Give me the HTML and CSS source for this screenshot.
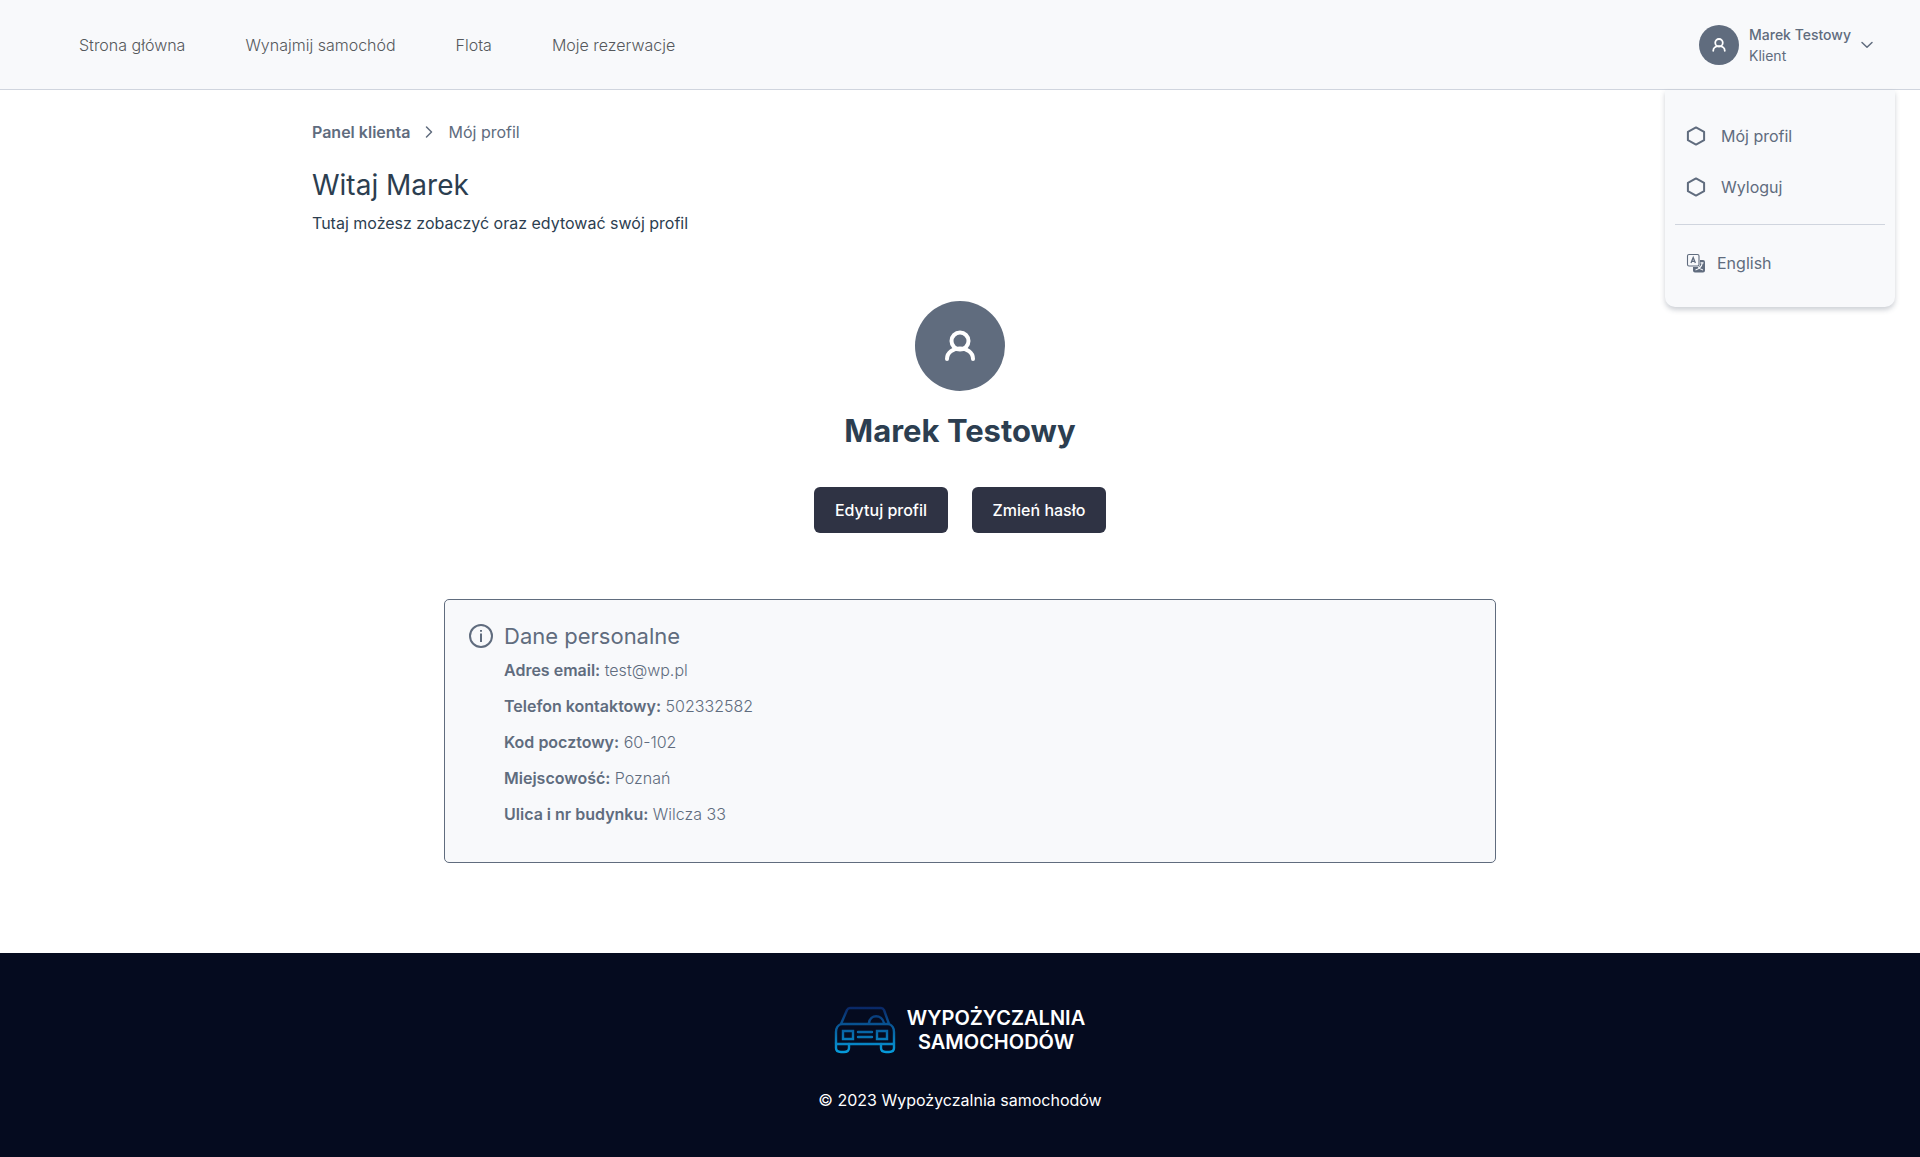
FILE: index.html
```
<!DOCTYPE html>
<html lang="pl">
<head>
<meta charset="utf-8">
<meta name="viewport" content="width=device-width, initial-scale=1">
<title>Mój profil</title>
<link rel="stylesheet" href="styles.css">
</head>
<body>
<header class="topbar">
  <nav class="main-nav">
    <a href="#">Strona główna</a>
    <a href="#">Wynajmij samochód</a>
    <a href="#">Flota</a>
    <a href="#">Moje rezerwacje</a>
  </nav>
  <div class="account">
    <button class="account-toggle" type="button" aria-expanded="true">
      <span class="avatar avatar-small">
        <svg width="16" height="16" viewBox="0 0 36 36" fill="none" stroke="currentColor" stroke-width="4" stroke-linecap="round"><circle cx="18" cy="13" r="8.500"/><path d="M5 31C5 17 31 17 31 31"/></svg>
      </span>
      <span class="account-text"><span class="account-name">Marek Testowy</span><span>Klient</span></span>
      <svg width="13" height="8" viewBox="1 0 13 8" fill="none" stroke="currentColor" stroke-width="1.500" stroke-linecap="round" stroke-linejoin="round"><path d="M2 1.500L7 6.200L12 1.500"/></svg>
    </button>
    <nav class="menu">
      <a class="menu-item" href="#">
        <svg width="20" height="20" viewBox="0 0 20 20" fill="none" stroke="currentColor" stroke-width="2" stroke-linejoin="round"><path d="M10 1.400L18.100 5.800V14.200L10 18.600L1.900 14.200V5.800Z"/></svg>
        Mój profil
      </a>
      <a class="menu-item" href="#">
        <svg width="20" height="20" viewBox="0 0 20 20" fill="none" stroke="currentColor" stroke-width="2" stroke-linejoin="round"><path d="M10 1.400L18.100 5.800V14.200L10 18.600L1.900 14.200V5.800Z"/></svg>
        Wyloguj
      </a>
      <hr class="menu-rule">
      <a class="menu-item menu-language" href="#">
        <svg width="20" height="20" viewBox="0 0 20 20" fill="none">
          <path d="M14 7H17a2 2 0 0 1 2 2V17.500a2 2 0 0 1-2 2H9a2 2 0 0 1-2-2V14H12a2 2 0 0 0 2-2Z" fill="currentColor"/>
          <rect x="1.500" y="1.500" width="11.500" height="11.500" rx="1.500" stroke="currentColor" stroke-width="1.100"/>
          <path d="M5 10L7.200 4.500L9.400 10M5.800 8.300H8.600" stroke="currentColor" stroke-width="1.300"/>
          <path d="M14.500 9.800H17.500M16.300 10C15.800 13 13 16 9.500 17M12.300 14C13.500 15.700 15 16.700 17 17" stroke="#f8f9fb" stroke-width="1.200"/>
        </svg>
        English
      </a>
    </nav>
  </div>
</header>

<main class="page">
  <nav class="breadcrumb" aria-label="Breadcrumb">
    <a href="#">Panel klienta</a>
    <svg width="8" height="14" viewBox="0 0 8 14" fill="none" stroke="currentColor" stroke-width="1.500" stroke-linecap="round" stroke-linejoin="round"><path d="M1.500 2L6.500 7L1.500 12"/></svg>
    <span>Mój profil</span>
  </nav>
  <h1 class="welcome">Witaj Marek</h1>
  <p class="lead">Tutaj możesz zobaczyć oraz edytować swój profil</p>

  <section class="profile">
    <span class="avatar avatar-large">
      <svg width="36" height="36" viewBox="0 0 36 36" fill="none" stroke="currentColor" stroke-width="4" stroke-linecap="round"><circle cx="18" cy="13" r="8.500"/><path d="M5 31C5 17 31 17 31 31"/></svg>
    </span>
    <h2 class="profile-name">Marek Testowy</h2>
    <div class="actions">
      <button class="button" type="button">Edytuj profil</button>
      <button class="button" type="button">Zmień hasło</button>
    </div>
  </section>

  <section class="card">
    <svg class="card-icon" width="24" height="24" viewBox="0 0 24 24" fill="none" stroke="currentColor" stroke-width="2"><circle cx="12" cy="12" r="11"/><path d="M12 9.500V18M12 6V7.800"/></svg>
    <div>
      <h3 class="card-title">Dane personalne</h3>
      <p class="field"><strong>Adres email:</strong> test@wp.pl</p>
      <p class="field"><strong>Telefon kontaktowy:</strong> 502332582</p>
      <p class="field"><strong>Kod pocztowy:</strong> 60-102</p>
      <p class="field"><strong>Miejscowość:</strong> Poznań</p>
      <p class="field"><strong>Ulica i nr budynku:</strong> Wilcza 33</p>
    </div>
  </section>
</main>

<footer class="footer">
  <div class="brand">
    <svg width="60" height="48" viewBox="0 0 60 48" fill="none" stroke="url(#car)" stroke-width="2.400" stroke-linejoin="round" stroke-linecap="round">
      <defs><linearGradient id="car" gradientUnits="userSpaceOnUse" x1="0" y1="0" x2="0" y2="48"><stop offset="0" stop-color="#0a2463"/><stop offset="1" stop-color="#069fdf"/></linearGradient></defs>
      <path d="M6 18L12 4Q13 2 15 2H46Q48 2 49 4L54 18"/>
      <path d="M6 18H54Q59 20 59 26V37Q59 38 58 38H2Q1 38 1 37V26Q1 20 6 18Z"/>
      <path d="M34 17C35 8 47 8 49 17"/>
      <path d="M1 37V42Q1 46 6 46H9Q14 46 14 42V38M46 38V42Q46 46 51 46H54Q59 46 59 42V37"/>
      <path d="M8 25H18V33H8ZM42 25H52V33H42ZM23 26H37M23 31H37" stroke-linejoin="miter"/>
    </svg>
    <p class="brand-name">WYPOŻYCZALNIA<br>SAMOCHODÓW</p>
  </div>
  <p class="copyright">© 2023 Wypożyczalnia samochodów</p>
</footer>
</body>
</html>
```
FILE: styles.css
```
* { box-sizing: border-box; }

body {
  margin: 0;
  min-height: 100vh;
  display: flex;
  flex-direction: column;
  background: #fff;
  color: #2c3e50;
  font: 400 16px/24px Inter, "Liberation Sans", sans-serif;
}

h1, h2, h3, p { margin: 0; }
a { color: inherit; text-decoration: none; }
svg { display: block; flex: none; overflow: visible; }
button { font: inherit; cursor: pointer; border: 0; }

.topbar {
  display: flex;
  justify-content: space-between;
  align-items: center;
  height: 90px;
  padding: 0 46px 0 79px;
  background: #f8f9fb;
  border-bottom: 1px solid #d0d5de;
  color: #606c7e;
}

.main-nav {
  display: flex;
  gap: 60px;
  color: #55585c;
  font-weight: 300;
}

.account-toggle {
  display: flex;
  align-items: center;
  gap: 10px;
  padding: 0;
  background: none;
  color: inherit;
  text-align: left;
}

.account-text {
  display: flex;
  flex-direction: column;
  font-size: 14px;
  line-height: 21px;
}

.account-name { font-weight: 500; }

.avatar {
  display: flex;
  align-items: center;
  justify-content: center;
  border-radius: 50%;
  background: #606c7e;
  color: #fff;
}

.avatar-small { width: 40px; height: 40px; }
.avatar-large { width: 90px; height: 90px; }

.menu {
  position: absolute;
  top: 90px;
  right: 25px;
  width: 230px;
  padding: 20px 10px 19px;
  background: #f8f9fb;
  border-radius: 0 0 10px 10px;
  box-shadow: 0 3px 5px rgba(60, 70, 90, .25);
}

.menu-item {
  display: flex;
  align-items: center;
  gap: 15px;
  height: 51px;
  padding: 0 11px;
}

.menu-language { gap: 11px; }

.menu-rule {
  margin: 12px 0;
  border: 0;
  border-top: 1px solid #d0d5de;
}

.page {
  width: 100%;
  max-width: 1320px;
  margin: 0 auto;
  padding: 30px 12px 90px;
  flex: 1;
}

.breadcrumb {
  display: flex;
  align-items: center;
  gap: 15px;
  color: #606c7e;
}

.breadcrumb a { font-weight: 600; }

.welcome {
  margin-top: 24px;
  font-size: 28px;
  line-height: 34px;
  font-weight: 400;
}

.lead { margin-top: 9px; }

.profile {
  display: flex;
  flex-direction: column;
  align-items: center;
  margin-top: 66px;
}

.profile-name {
  margin-top: 20px;
  font-size: 31px;
  line-height: 40px;
  font-weight: 700;
}

.actions {
  display: flex;
  gap: 24px;
  margin-top: 36px;
}

.button {
  width: 134px;
  height: 46px;
  padding: 0;
  border-radius: 6px;
  background: #2f3344;
  color: #fff;
  font-weight: 500;
}

.card {
  display: flex;
  gap: 11px;
  margin: 66px 112px 0 132px;
  padding: 24px;
  border: 1px solid #606c7e;
  border-radius: 5px;
  background: #f8f9fb;
  color: #606c7e;
}

.card-title {
  margin-bottom: 10px;
  font-size: 22px;
  line-height: 24px;
  font-weight: 400;
}

.field {
  margin-bottom: 12px;
  font-weight: 300;
}

.field strong { font-weight: 600; }

.footer {
  display: flex;
  flex-direction: column;
  align-items: center;
  gap: 34px;
  padding: 53px 24px 45px;
  background: #050b1f;
  color: #fff;
}

.brand {
  display: flex;
  align-items: center;
  gap: 12px;
}

.brand-name {
  font-size: 20px;
  font-weight: 600;
  text-align: center;
}
```
